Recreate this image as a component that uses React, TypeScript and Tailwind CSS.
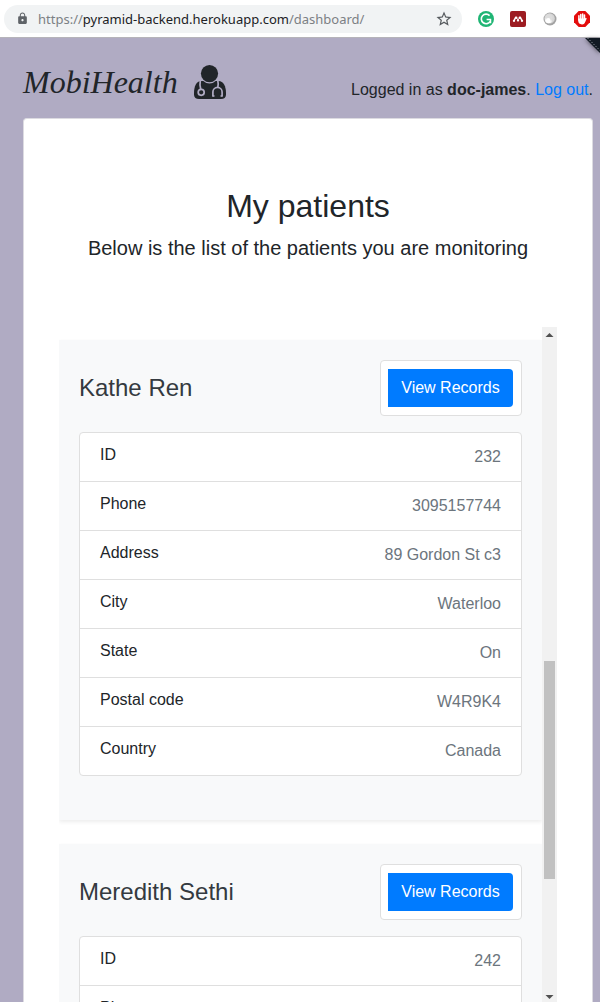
import React from "react";
import { MdLock, MdStarBorder } from "react-icons/md";

type Field = { label: string; value: string };
type Patient = { name: string; fields: Field[] };

const patients: Patient[] = [
  {
    name: "Kathe Ren",
    fields: [
      { label: "ID", value: "232" },
      { label: "Phone", value: "3095157744" },
      { label: "Address", value: "89 Gordon St c3" },
      { label: "City", value: "Waterloo" },
      { label: "State", value: "On" },
      { label: "Postal code", value: "W4R9K4" },
      { label: "Country", value: "Canada" },
    ],
  },
  {
    name: "Meredith Sethi",
    fields: [
      { label: "ID", value: "242" },
      { label: "Phone", value: "" },
    ],
  },
];

function GrammarIcon() {
  return (
    <svg viewBox="0 0 16 16" className="size-4" aria-hidden="true">
      <circle cx="8" cy="8" r="8" fill="#1fb574" />
      <path d="M11.6 4.6A4.8 4.8 0 1 0 12.2 10.400" fill="none" stroke="#fff" strokeWidth="1.6" />
      <path d="M8.6 8.6h3.900v3.600" fill="none" stroke="#fff" strokeWidth="1.5" />
    </svg>
  );
}

function LibraryIcon() {
  return (
    <svg viewBox="0 0 16 16" className="size-4" aria-hidden="true">
      <rect width="16" height="16" rx="2" fill="#9d1c22" />
      <path d="M4 9.800L5.300 7M8 9.800V7.500M12 9.800L10.700 7" stroke="#fff" strokeWidth="1.500" />
      <rect x="4.800" y="5.400" width="2.600" height="2.600" rx="1" fill="#fff" />
      <rect x="8.600" y="5.400" width="2.600" height="2.600" rx="1" fill="#fff" />
      <rect x="2.900" y="8.700" width="2.200" height="2.200" rx="0.800" fill="#fff" />
      <rect x="6.900" y="8.400" width="2.200" height="2.200" rx="0.800" fill="#fff" />
      <rect x="10.900" y="8.700" width="2.200" height="2.200" rx="0.800" fill="#fff" />
    </svg>
  );
}

function OrbIcon() {
  return (
    <svg viewBox="0 0 16 16" className="size-4" aria-hidden="true">
      <circle cx="8" cy="8" r="6.500" fill="#a3a3a3" />
      <circle cx="7.600" cy="7.400" r="5.200" fill="#d6d6d6" />
      <circle cx="6.500" cy="9" r="3.300" fill="#fff" />
      <circle cx="7" cy="6.800" r="3.600" fill="#dcdcdc" />
      <circle cx="6.200" cy="9.300" r="2.300" fill="#fff" />
    </svg>
  );
}

function BlockIcon() {
  return (
    <svg viewBox="0 0 16 16" className="size-4" aria-hidden="true">
      <path d="M4.700 0h6.600L16 4.700v6.600L11.300 16H4.700L0 11.300V4.700z" fill="#e40d0d" />
      <g stroke="#fff" strokeWidth="1.500" strokeLinecap="round">
        <path d="M4.900 4.800V9M6.800 3.400V8M8.700 3V8M10.500 4V9" />
        <path d="M11.900 7.600L10.300 10.600" />
      </g>
      <path d="M4.200 7.500h7.100v2.900c-.5 2-1.500 3-3.300 3-2.300 0-3.800-1.300-3.800-3.600z" fill="#fff" />
    </svg>
  );
}

function DoctorIcon() {
  return (
    <svg viewBox="0 0 32 34" className="h-[34px] w-8" fill="none" aria-hidden="true">
      <path
        d="M7 16H24.500C29.500 16 32 21.500 32 28V29.500C32 32.500 30 34 27 34H5C2 34 0 32.500 0 29.500V28C0 21.500 2.500 16 7 16Z"
        fill="#212529"
      />
      <circle cx="15.500" cy="8.600" r="9.800" fill="#b0abc3" />
      <circle cx="15.500" cy="8.600" r="8.600" fill="#212529" />
      <g stroke="#b0abc3" strokeWidth="1.700">
        <path d="M6.300 15.500C5.800 18 5.800 21 6.800 24.500" />
        <circle cx="7.200" cy="27.300" r="3" />
        <path d="M23.800 15.500C24.300 17.500 24.300 20 23.800 22.500" />
        <path d="M18.900 31.500V27a4.600 4.600 0 0 1 9.200 0V31.500" />
        <path d="M18.500 31h2M26.500 31h2" />
      </g>
    </svg>
  );
}

function AddressBar() {
  return (
    <div className="flex h-[38px] shrink-0 items-center gap-4 border-b border-[#b6b4ba] bg-white pl-1 pr-[10px]">
      <div className="flex h-7 min-w-0 flex-1 items-center rounded-full bg-[#f1f3f4] pl-3 pr-[9px]">
        <MdLock className="size-[13px] shrink-0 text-[#5f6368]" />
        <span className="ml-[9px] flex-1 truncate font-['Noto_Sans',sans-serif] text-[13px] leading-5 text-[#7c8084]">
          https://<span className="text-[#202124]">pyramid-backend.herokuapp.com</span>/dashboard/
        </span>
        <button type="button" aria-label="Bookmark" className="shrink-0 text-[#55595d]">
          <MdStarBorder className="size-[18px]" />
        </button>
      </div>
      <GrammarIcon />
      <LibraryIcon />
      <OrbIcon />
      <BlockIcon />
    </div>
  );
}

function PatientCard({ name, fields }: Patient) {
  return (
    <article className="bg-[#f8f9fa] px-5 pt-5 pb-11 shadow-[0_2px_4px_rgba(0,0,0,0.075)]">
      <div className="flex items-center justify-between">
        <h2 className="text-[24px] leading-7 text-[#343a40]">{name}</h2>
        <div className="rounded border border-[#dfdfdf] bg-white py-2 pr-2 pl-[7px]">
          <button
            type="button"
            className="w-[125px] rounded-r bg-[#007bff] py-[7px] text-[16px] leading-6 text-white"
          >
            View Records
          </button>
        </div>
      </div>
      <dl className="mt-4 divide-y divide-[#dfdfdf] rounded border border-[#dfdfdf] bg-white">
        {fields.map((field) => (
          <div key={field.label} className="flex items-start justify-between px-5 py-3">
            <dt className="leading-[19px]">{field.label}</dt>
            <dd className="h-6 leading-6 text-[#6c757d]">{field.value}</dd>
          </div>
        ))}
      </dl>
    </article>
  );
}

function Scrollbar() {
  return (
    <div className="flex w-[15px] shrink-0 flex-col items-center bg-[#f1f1f1]" aria-hidden="true">
      <svg viewBox="0 0 15 15" className="h-[15px] w-[15px] shrink-0">
        <path d="M3.500 10h8L7.500 6z" fill="#505050" />
      </svg>
      <div className="grow-[319] basis-0" />
      <div className="w-[11px] grow-[218] basis-0 bg-[#c1c1c1]" />
      <div className="grow-[111] basis-0" />
      <svg viewBox="0 0 15 12" className="h-3 w-[15px] shrink-0">
        <path d="M3.500 5h8l-4 4z" fill="#505050" />
      </svg>
    </div>
  );
}

export default function App() {
  return (
    <div className="flex h-screen flex-col overflow-hidden bg-[#b0abc3] font-['Liberation_Sans',Arial,sans-serif] text-[16px] text-[#212529]">
      <AddressBar />
      <div className="relative flex min-h-0 flex-1 flex-col pl-[23px] pr-[7px]">
        <svg
          viewBox="0 0 20 20"
          className="absolute top-0 right-0 size-5 drop-shadow-[0_1px_2px_rgba(0,0,0,0.5)]"
          aria-hidden="true"
        >
          <path d="M5 0h15v15z" fill="#111923" />
          <path d="M7.500 0L20 12.500" stroke="#8d929b" strokeWidth="1" strokeDasharray="1.400 1.400" />
        </svg>
        <header className="flex h-20 shrink-0 items-center justify-between">
          <div className="flex items-center gap-4 pt-2">
            <span className="font-['Liberation_Serif',serif] text-[32px] leading-10 italic">MobiHealth</span>
            <DoctorIcon />
          </div>
          <p className="pt-6 leading-6">
            Logged in as <strong className="font-bold">doc-james</strong>.{" "}
            <a href="#logout" className="text-[#007bff]">
              Log out
            </a>
            .
          </p>
        </header>
        <main className="flex min-h-0 flex-1 flex-col rounded-t border border-b-0 border-[#dcdbe1] bg-white px-[35px] pt-[68px]">
          <div className="text-center">
            <h1 className="text-[32px] leading-[38px]">My patients</h1>
            <p className="mt-2 text-[20px] leading-[30px]">Below is the list of the patients you are monitoring</p>
          </div>
          <section className="mt-16 flex min-h-0 flex-1" aria-label="Patients">
            <div className="flex min-w-0 flex-1 flex-col gap-6 overflow-x-hidden overflow-y-auto pt-[13px] [scrollbar-width:none]">
              {patients.map((patient) => (
                <PatientCard key={patient.name} {...patient} />
              ))}
            </div>
            <Scrollbar />
          </section>
        </main>
      </div>
    </div>
  );
}
